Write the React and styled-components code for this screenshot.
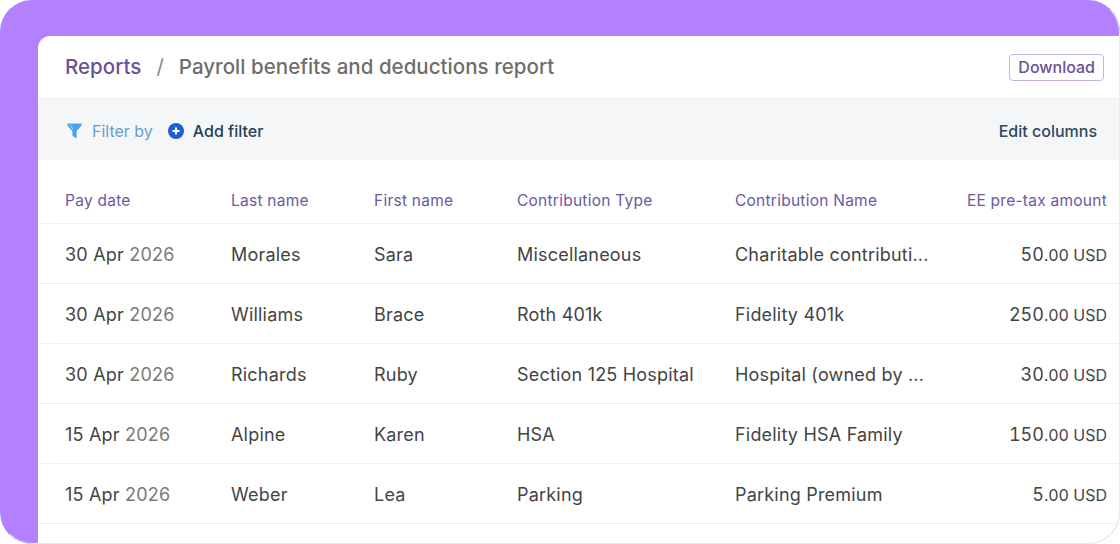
import styled, { createGlobalStyle } from "styled-components";

const Global = createGlobalStyle`
  html, body {
    margin: 0;
    background: #fff;
    font-family: Inter, "Liberation Sans", sans-serif;
  }
`;

const Frame = styled.div`
  box-sizing: border-box;
  width: 1120px;
  height: 544px;
  padding: 36px 0 0 38px;
  background: #b380ff;
  border-radius: 32px;
  overflow: hidden;
  position: relative;
  &::after {
    content: "";
    position: absolute;
    inset: 0;
    border-radius: 32px;
    border: 1px solid transparent;
    border-right-color: #e9e9ee;
    border-bottom-color: #e9e9ee;
    pointer-events: none;
  }
`;

const Panel = styled.div`
  height: 100%;
  background: #fff;
  border-top-left-radius: 12px;
  overflow: hidden;
`;

const TitleBar = styled.div`
  height: 61px;
  display: flex;
  align-items: center;
  justify-content: space-between;
  padding: 0 16px 0 27px;
`;

const Crumbs = styled.div`
  display: flex;
  align-items: center;
  font-size: 20.5px;
  font-weight: 500;
  letter-spacing: 0.03px;
  color: #6f6e69;
`;

const CrumbLink = styled.span`
  color: #6a5196;
`;

const Slash = styled.span`
  margin: 0 15px;
  font-weight: 400;
  color: #8a8985;
`;

const DownloadButton = styled.button`
  height: 27px;
  margin-top: 1px;
  padding: 0 8px;
  background: #fff;
  border: 1px solid #c9afe8;
  border-radius: 4px;
  color: #6a5196;
  font: 500 16px Inter, sans-serif;
`;

const Toolbar = styled.div`
  box-sizing: border-box;
  height: 63px;
  display: flex;
  align-items: center;
  justify-content: space-between;
  padding: 4px 23px 0 29px;
  background: #f5f6f8;
`;

const FilterGroup = styled.div`
  display: flex;
  align-items: center;
`;

const FilterLabel = styled.span`
  margin-left: 10px;
  font-size: 16px;
  color: #6a9fcb;
`;

const AddFilter = styled.span`
  display: flex;
  align-items: center;
  gap: 9px;
  margin-left: 15px;
  font-size: 16px;
  font-weight: 500;
  color: #23405a;
`;

const EditColumns = styled.span`
  font-size: 16px;
  font-weight: 500;
  color: #2c4a60;
`;

const Row = styled.div`
  display: grid;
  grid-template-columns: 166px 143px 143px 218px 1fr auto;
  align-items: center;
  height: ${(p) => (p.$head ? "63px" : "59px")};
  padding: 0 13px 0 27px;
  border-bottom: 1px solid #edf0f2;
  font-size: ${(p) => (p.$head ? "15.5px" : "18px")};
  letter-spacing: ${(p) => (p.$head ? "0.25px" : "0.2px")};
  color: ${(p) => (p.$head ? "#6a5a9e" : "#444444")};
  white-space: nowrap;
`;

const HeadCell = styled.span`
  padding-top: 17px;
  text-align: ${(p) => (p.$right ? "right" : "left")};
`;

const Cell = styled.span`
  padding-top: 1px;
`;

const Year = styled.span`
  color: #7b7a75;
`;

const Amount = styled(Cell)`
  text-align: right;
  font-variant-numeric: tabular-nums;
  letter-spacing: 0;
`;

const Cents = styled.span`
  font-size: 16px;
`;

const FilterIcon = () => (
  <svg width="15" height="16" viewBox="0 0 16 16" preserveAspectRatio="none">
    <path d="M0.5 0.5H15.5V2.5L10.2 8.2V15.5L5.8 12.8V8.2L0.5 2.5Z" fill="#4a9ff0" />
    <path d="M3 1.5L7 7" stroke="#a9d2f8" strokeWidth="1" fill="none" />
  </svg>
);

const PlusIcon = () => (
  <svg width="16" height="16" viewBox="0 0 16 16">
    <circle cx="8" cy="8" r="8" fill="#1f5fd6" />
    <path d="M8 4.5V11.5M4.5 8H11.5" stroke="#fff" strokeWidth="2" />
  </svg>
);

const rows = [
  ["30 Apr", "Morales", "Sara", "Miscellaneous", "Charitable contributi...", "50"],
  ["30 Apr", "Williams", "Brace", "Roth 401k", "Fidelity 401k", "250"],
  ["30 Apr", "Richards", "Ruby", "Section 125 Hospital", "Hospital (owned by ...", "30"],
  ["15 Apr", "Alpine", "Karen", "HSA", "Fidelity HSA Family", "150"],
  ["15 Apr", "Weber", "Lea", "Parking", "Parking Premium", "5"],
];

export default function App() {
  return (
    <Frame>
      <Global />
      <Panel>
        <TitleBar>
          <Crumbs>
            <CrumbLink>Reports</CrumbLink>
            <Slash>/</Slash>
            Payroll benefits and deductions report
          </Crumbs>
          <DownloadButton>Download</DownloadButton>
        </TitleBar>
        <Toolbar>
          <FilterGroup>
            <FilterIcon />
            <FilterLabel>Filter by</FilterLabel>
            <AddFilter>
              <PlusIcon />
              Add filter
            </AddFilter>
          </FilterGroup>
          <EditColumns>Edit columns</EditColumns>
        </Toolbar>
        <Row $head>
          <HeadCell>Pay date</HeadCell>
          <HeadCell>Last name</HeadCell>
          <HeadCell>First name</HeadCell>
          <HeadCell>Contribution Type</HeadCell>
          <HeadCell>Contribution Name</HeadCell>
          <HeadCell $right>EE pre-tax amount</HeadCell>
        </Row>
        {rows.map((r) => (
          <Row key={r[1]}>
            <Cell>
              {r[0]} <Year>2026</Year>
            </Cell>
            <Cell>{r[1]}</Cell>
            <Cell>{r[2]}</Cell>
            <Cell>{r[3]}</Cell>
            <Cell>{r[4]}</Cell>
            <Amount>
              {r[5]}
              <Cents>.00 USD</Cents>
            </Amount>
          </Row>
        ))}
      </Panel>
    </Frame>
  );
}
